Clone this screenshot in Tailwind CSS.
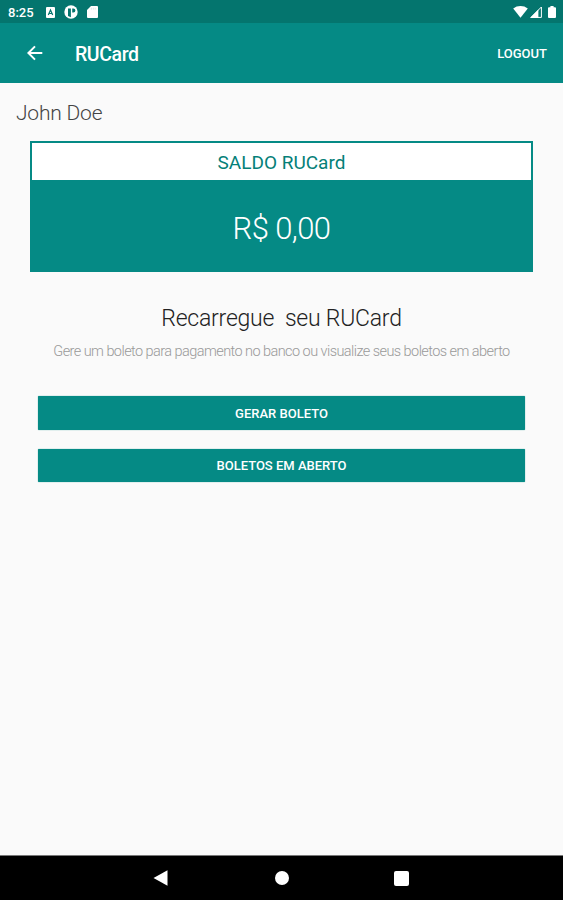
<!DOCTYPE html>
<html lang="pt-BR">
<head>
    <meta charset="UTF-8">
    <meta name="viewport" content="width=device-width, initial-scale=1.0">
    <title>RUCard</title>
    <script src="https://cdn.jsdelivr.net/npm/@tailwindcss/browser@4"></script>
</head>
<body class="bg-[#fafafa] font-['Roboto',sans-serif]">
    <div class="flex h-[900px] flex-col overflow-hidden">
        <!-- Status bar -->
        <div class="flex h-[23px] shrink-0 items-center bg-[#04756e] pl-2 pr-[7px] text-white">
            <span class="w-[38px] pt-0.5 text-[13px] leading-none font-medium">8:25</span>
            <svg class="mt-px h-[11px] w-[9px]" viewBox="0 0 9 11">
                <rect width="9" height="11" rx="1" fill="#fff"/>
                <path d="M2.3 8 4.5 3 6.7 8M3.2 6.5h2.6" fill="none" stroke="#04756e" stroke-width="1.2"/>
            </svg>
            <svg class="mt-px ml-[9px] h-[14px] w-[14px]" viewBox="0 0 14 14">
                <circle cx="7" cy="7" r="6.7" fill="#fff"/>
                <path d="M4 3.4h2.9v8.8L4 11zM8.2 3.4h1.2a2 2 0 0 1 0 4H8.2z" fill="#04756e"/>
            </svg>
            <svg class="mt-px ml-[9px] h-3 w-[11px]" viewBox="0 0 11 12">
                <path d="M4 0h6a1 1 0 0 1 1 1v10a1 1 0 0 1-1 1H1a1 1 0 0 1-1-1V4z" fill="#fff"/>
                <path d="M4.4 1.7v2M6.3 1.7v2M8.2 1.7v2" stroke="#04756e" stroke-opacity=".2" stroke-width=".7"/>
            </svg>
            <svg class="mt-px ml-auto h-3 w-[15px]" viewBox="0 0 15 12">
                <path d="M.2 2.6a12 12 0 0 1 14.6 0L7.5 11.8z" fill="#fff"/>
            </svg>
            <svg class="mt-px ml-0.5 h-3 w-3" viewBox="0 0 12 12">
                <path d="M11.4 1v10.4H1z" fill="none" stroke="#fff"/>
                <path d="M8.4 3.6V12H0z" fill="#fff"/>
            </svg>
            <svg class="mt-px ml-[6px] h-3 w-2" viewBox="0 0 8 12">
                <path d="M2.4 0h3.2v1.3H7a1 1 0 0 1 1 1V11a1 1 0 0 1-1 1H1a1 1 0 0 1-1-1V2.3a1 1 0 0 1 1-1h1.4z" fill="#fff"/>
            </svg>
        </div>

        <!-- App bar -->
        <header class="flex h-[60px] shrink-0 items-center bg-[#058a85] pr-4 pl-[27px] text-white">
            <svg class="h-4 w-4" viewBox="0 0 16 16" fill="none" stroke="#fff" stroke-width="2">
                <path d="M15.3 8H1.5M8 1.4 1.4 8 8 14.6"/>
            </svg>
            <h1 class="ml-8 pt-[3px] text-[19.5px] font-medium tracking-[-0.4px]">RUCard</h1>
            <button class="ml-auto pt-0.5 text-[13px] font-medium">LOGOUT</button>
        </header>

        <main class="flex flex-1 flex-col">
            <p class="pt-[15px] pl-4 text-[21px] leading-[30px] font-light tracking-[-0.2px] text-[#444]">John Doe</p>

            <!-- Balance -->
            <section class="mx-[30px] mt-[13px] flex h-[131px] flex-col border-2 border-[#058a85] bg-[#058a85] text-center">
                <h2 class="h-[37px] bg-white text-[19px] leading-[39px] text-[#058078]">SALDO RUCard</h2>
                <p class="pt-[29px] text-[31px] leading-[40px] font-light tracking-[-0.6px] text-white">R$ 0,00</p>
            </section>

            <section class="text-center">
                <h2 class="pt-[31px] text-[23px] leading-[32px] font-light tracking-[-0.23px] whitespace-pre text-[#222]">Recarregue  seu RUCard</h2>
                <p class="pt-[7px] text-[14.5px] leading-[20px] font-light tracking-[-0.56px] whitespace-nowrap text-[#999]">Gere um boleto para pagamento no banco ou visualize seus boletos em aberto</p>
            </section>

            <div class="mt-[34px] flex flex-col gap-[19px] px-[38px] text-[13px] font-medium text-white">
                <button class="h-[33.5px] rounded-[1px] bg-[#058a85] pt-px shadow-[0_0_1px_#058a85]">GERAR BOLETO</button>
                <button class="h-[33.5px] rounded-[1px] bg-[#058a85] pt-px shadow-[0_0_1px_#058a85]">BOLETOS EM ABERTO</button>
            </div>
        </main>

        <!-- Navigation bar -->
        <nav class="flex h-[45px] shrink-0 items-center border-t border-[#777] bg-black pl-[153px]">
            <svg class="h-4 w-[15px]" viewBox="0 0 15 16"><path d="M.5 8 14.5.3v15.4z" fill="#fff"/></svg>
            <div class="ml-[107px] size-[14px] rounded-full bg-white"></div>
            <div class="ml-[105px] size-[15px] rounded-[2px] bg-white"></div>
        </nav>
    </div>
</body>
</html>
